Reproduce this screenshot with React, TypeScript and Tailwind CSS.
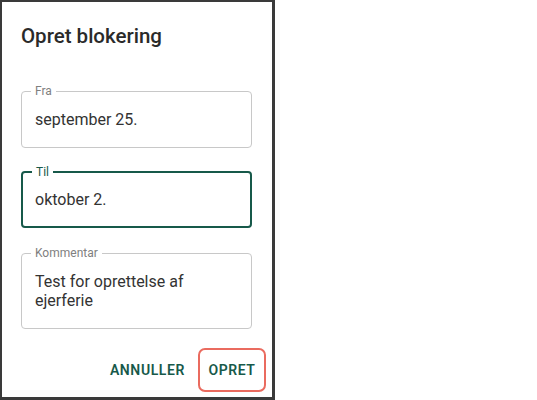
import React from 'react';

function Field({ label, value, active, tall }: { label: string; value: React.ReactNode; active?: boolean; tall?: boolean }) {
  return (
    <div
      className={`relative rounded ${active ? 'border-2 border-[#17594a]' : 'border border-[#c8c8c8]'} ${tall ? 'h-[76px] pt-[18px]' : 'h-[57px] flex items-center'}`}
    >
      <span
        className={`absolute -top-[9px] left-[9px] bg-white px-[4px] text-[12px] leading-[16px] ${active ? 'text-[#17594a]' : 'text-[#808080]'}`}
      >
        {label}
      </span>
      <div className={`${active ? 'pl-[12px]' : 'pl-[13px]'} text-[16px] leading-[19px] text-[#333]`}>{value}</div>
    </div>
  );
}

export default function App() {
  return (
    <div className="w-[537px] h-[400px] bg-white" style={{ fontFamily: 'Roboto, "Liberation Sans", sans-serif' }}>
      <div className="w-[275px] h-[400px] border-l-2 border-t-2 border-r-[3px] border-b-[3px] border-[#3a3a3a] flex flex-col px-[19px] pr-[20px]">
        <h2 className="mt-[20px] text-[20.5px] leading-[28px] font-medium text-[#2a2a2a]">Opret blokering</h2>

        <div className="mt-[41px] flex flex-col gap-[23px]">
          <Field label="Fra" value="september 25." />
          <Field label="Til" value="oktober 2." active />
          <div className="mt-[2px]">
            <Field
              label="Kommentar"
              tall
              value={
                <>
                  Test for oprettelse af
                  <br />
                  ejerferie
                </>
              }
            />
          </div>
        </div>

        <div className="mt-[19px] flex items-center justify-end gap-[11px] -mr-[14px]">
          <button className="px-[2px] text-[14px] font-semibold tracking-[0.6px] text-[#17594a]">ANNULLER</button>
          <button className="h-[44px] w-[68px] rounded-[7px] border-2 border-[#ea6b5f] text-[14px] font-semibold tracking-[0.6px] text-[#17594a]">
            OPRET
          </button>
        </div>
      </div>
    </div>
  );
}
